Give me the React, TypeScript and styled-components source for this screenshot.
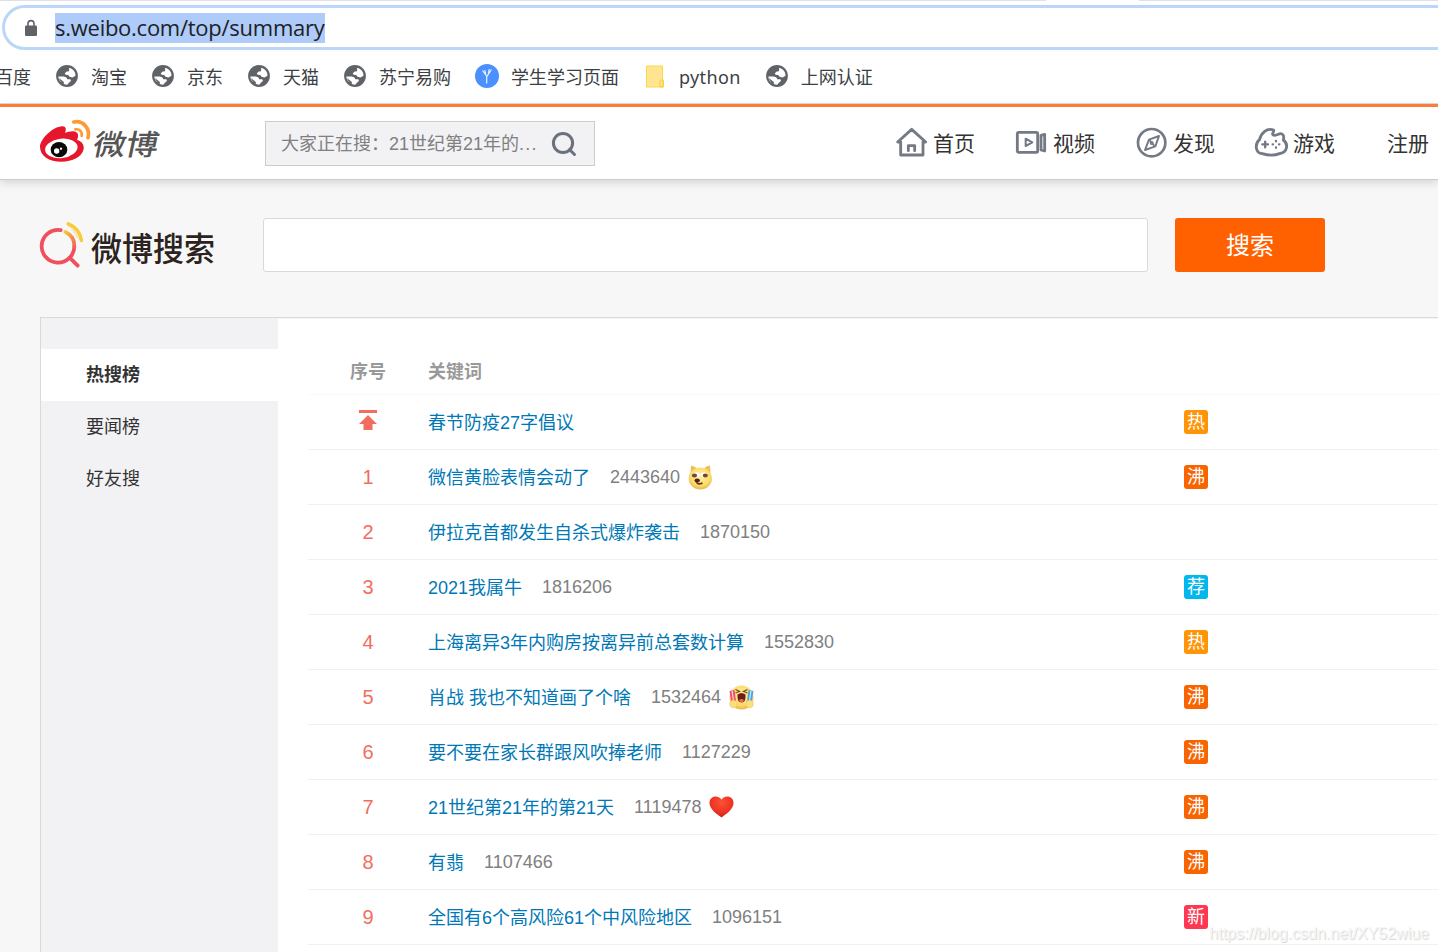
import React from "react";
import styled, { createGlobalStyle } from "styled-components";

const GlobalStyle = createGlobalStyle`
  * { box-sizing: border-box; }
  html, body { margin: 0; padding: 0; overflow: hidden; background: #f7f7f7; }
  body { font-family: "Liberation Sans", "Noto Sans CJK SC", sans-serif; font-size: 18px; color: #333; }
  svg { display: block; flex: none; overflow: visible; }
`;

const Page = styled.div`
  width: 1438px;
  height: 952px;
  display: flex;
  flex-direction: column;
  overflow: hidden;
  position: relative;
`;

const TabEdge = styled.div`
  display: flex;
  justify-content: space-between;
  flex: none;
  height: 5px;
  background: #fff;
`;
const TabEdgeLine = styled.div<{ $w: number }>`
  width: ${(p) => p.$w}px;
  height: 1px;
  background: #dee1e6;
`;

const AddressRow = styled.div`
  flex: none;
  height: 45px;
  padding-left: 2px;
  background: #fff;
`;
const AddressBar = styled.div`
  width: 1470px;
  height: 45px;
  border: 3px solid #bad6f8;
  border-radius: 23px;
  display: flex;
  align-items: center;
  padding-left: 20px;
`;
const Url = styled.span`
  margin-left: 18px;
  height: 30px;
  line-height: 28px;
  width: 270px;
  white-space: nowrap;
  background: #aecbfa;
  color: #202124;
  font-family: "Open Sans", "Noto Sans", sans-serif;
  font-size: 22px;
  letter-spacing: -0.26px;
`;

const Bookmarks = styled.div`
  flex: none;
  height: 54px;
  display: flex;
  align-items: center;
  gap: 24px;
  background: #fff;
  border-bottom: 1px solid #dadce0;
  margin-left: -5px;
  color: #3c4043;
  font-family: "Noto Sans", "Noto Sans CJK SC", sans-serif;
`;
const Bookmark = styled.div`
  display: flex;
  align-items: center;
  gap: 12px;
  white-space: nowrap;
  line-height: 26px;
`;
const Latin = styled.span`
  letter-spacing: 0.35px;
`;

const Header = styled.header`
  flex: none;
  height: 76px;
  border-top: 3px solid #fa7d3c;
  border-bottom: 1px solid #ccc;
  background: #fff;
  box-shadow: 0 3px 9px rgba(0, 0, 0, 0.14);
  display: flex;
  align-items: center;
  padding-left: 40px;
  position: relative;
`;
const WeiboLogo = styled.div`
  width: 225px;
  display: flex;
  align-items: center;
  margin-top: -5px;
`;
const WeiboName = styled.span`
  margin: 4px 0 0 3px;
  font-family: "Noto Sans CJK SC", sans-serif;
  font-size: 32.5px;
  line-height: 36px;
  font-weight: 500;
  color: #555;
  transform: skewX(-12deg) scaleY(0.88);
`;
const TopSearch = styled.div`
  width: 330px;
  height: 45px;
  border: 1px solid #ccc;
  background: #f2f2f5;
  display: flex;
  align-items: center;
  padding: 0 17px 0 15px;
  justify-content: space-between;
  color: #808080;
  white-space: nowrap;
`;
const Hint = styled.span`
  padding-bottom: 3px;
`;
const Dots = styled.span`
  letter-spacing: 1.2px;
`;
const Nav = styled.nav`
  display: flex;
  align-items: center;
  gap: 40px;
  margin-left: 301px;
`;
const NavItem = styled.div<{ $last?: boolean }>`
  display: flex;
  align-items: center;
  gap: 7px;
  width: ${(p) => (p.$last ? "auto" : "80px")};
  font-size: 21px;
  line-height: 30px;
  white-space: nowrap;
  color: #333;
  margin-left: ${(p) => (p.$last ? 11 : 0)}px;
`;
const NavLabel = styled.span`
  padding-top: 2px;
`;

const SearchBand = styled.section`
  flex: none;
  height: 137px;
  padding: 38px 0 0 40px;
  display: flex;
`;
const SearchLogo = styled.div`
  width: 223px;
  height: 54px;
  display: flex;
  align-items: center;
`;
const SearchName = styled.span`
  margin: 4px 0 0 7px;
  font-family: "Noto Sans CJK SC", sans-serif;
  font-size: 31px;
  line-height: 40px;
  font-weight: 500;
  color: #2c2320;
  transform: scaleY(1.08);
`;
const SearchInput = styled.div`
  width: 885px;
  height: 54px;
  background: #fff;
  border: 1px solid #d9d9d9;
  border-radius: 3px;
`;
const SearchButton = styled.button`
  width: 150px;
  height: 54px;
  margin-left: 27px;
  border: 0;
  padding: 0 0 4px;
  border-radius: 3px;
  background: #ff6000;
  color: #fff;
  font-family: inherit;
  font-size: 24px;
`;

const Panel = styled.main`
  flex: 1;
  min-height: 0;
  margin-left: 40px;
  border-top: 1px solid #d9d9d9;
  border-left: 1px solid #d9d9d9;
  background: #fff;
  display: flex;
`;
const Sidebar = styled.aside`
  width: 237px;
  flex: none;
  background: #f2f2f5;
  padding-top: 31px;
`;
const SideItem = styled.div<{ $active?: boolean }>`
  height: 52px;
  line-height: 53px;
  padding-left: 45px;
  background: ${(p) => (p.$active ? "#fff" : "transparent")};
  font-weight: ${(p) => (p.$active ? 700 : 400)};
`;
const Board = styled.div`
  flex: 1;
  padding: 29px 0 0 30px;
  border-top: 1px solid #f5f5f5;
`;
const Row = styled.div<{ $head?: boolean }>`
  display: grid;
  grid-template-columns: 120px 756px 1fr;
  align-items: center;
  height: ${(p) => (p.$head ? 47 : 55)}px;
  padding-bottom: ${(p) => (p.$head ? 2 : 0)}px;
  border-bottom: 1px solid ${(p) => (p.$head ? "#f9f9f9" : "#f0f0f2")};
  color: ${(p) => (p.$head ? "#999" : "inherit")};
  font-weight: ${(p) => (p.$head ? 700 : 400)};
`;
const Rank = styled.div`
  display: flex;
  justify-content: center;
  color: #f26d5f;
  font-size: 20px;
`;
const HeadCell = styled.div<{ $center?: boolean }>`
  text-align: ${(p) => (p.$center ? "center" : "left")};
`;
const Topic = styled.div`
  display: flex;
  align-items: center;
  white-space: nowrap;
`;
const Keyword = styled.a`
  color: #0078b6;
  padding-bottom: 3px;
`;
const Count = styled.span`
  margin: 0 8px 0 20px;
  color: #808080;
`;
const Badge = styled.span<{ $c: string }>`
  width: 24px;
  height: 24px;
  border-radius: 3px;
  background: ${(p) => p.$c};
  color: #fff;
  line-height: 25px;
  text-align: center;
`;
const Watermark = styled.div`
  position: absolute;
  right: 9px;
  bottom: 8px;
  font-size: 16px;
  line-height: 20px;
  color: #f6f6f6;
  text-shadow: 1px 1px 1px rgba(0, 0, 0, 0.17);
`;

const Lock = () => (
  <svg width="12" height="16" viewBox="0 0 12 16">
    <rect x="0" y="5.5" width="12" height="10.5" rx="1.3" fill="#5f6368" />
    <path d="M3 6V3.6a3 3 0 0 1 6 0V6" fill="none" stroke="#5f6368" strokeWidth="1.6" />
  </svg>
);

const Globe = () => (
  <svg width="24" height="24" viewBox="0 0 24 24">
    <circle cx="12" cy="11" r="10.9" fill="#5f6368" />
    <path
      d="M14.200 2.800C18.200 4 20.600 7 20.500 10.800L17.500 12.500 14.600 11.800 13.200 10 10.600 9.800 9.800 8.200 11.800 6.600 14 6.200z"
      fill="#fff"
    />
    <path d="M3.300 11.500H8c2.400 0 4 .8 4.200 2.700h2.600c1.200.2 1.500 1.200.8 2.100l-1.700 1.500-1.600 1.900c-5-.2-8.600-3.200-9-8.200z" fill="#fff" />
    <path d="M3.600 12.800l5.200 4.100v2.600l-2.400-1.300z" fill="#5f6368" />
  </svg>
);
const YIcon = () => (
  <svg width="24" height="24" viewBox="0 0 24 24">
    <circle cx="12" cy="11" r="12" fill="#4a90ff" />
    <path d="M7.500 5.500l4.200 5.700v7.300M16.500 4.500l-4.400 6.700M9.600 5l1.200 4.200M14.300 4l-.9 4.700" fill="none" stroke="#e8f1ff" strokeWidth="1.200" />
  </svg>
);
const Folder = () => (
  <svg width="24" height="24" viewBox="0 0 24 24">
    <path d="M3.500 1h16v14h1v7h-17z" fill="#ffe591" stroke="#fbd84b" />
    <path d="M17 22v-5.500q0-1.500 1.500-1.500t1.500 1.500V22z" fill="#ffe591" stroke="#f3cd43" />
  </svg>
);

const WeiboMark = () => (
  <svg width="51" height="42" viewBox="120 58 153 126">
    <path d="M120 138c1-23 38-60 67-61 12 0 12 10 8 20 12-5 27-8 36-1 6 6 3 15 0 22 14 4 22 14 20 27-4 24-34 38-67 38-37 0-64-17-64-45z" fill="#e6162d" />
    <ellipse cx="184" cy="143" rx="49" ry="29" transform="rotate(-7 184 143)" fill="#fff" />
    <ellipse cx="177" cy="147" rx="25" ry="23" fill="#0a0a0a" />
    <circle cx="170" cy="151" r="8" fill="#fff" />
    <circle cx="183" cy="144" r="3.500" fill="#fff" />
    <path d="M226 86c14-2 21 8 19 20" fill="none" stroke="#ff9933" strokeWidth="8" strokeLinecap="round" />
    <path d="M221 64c29-6 50 20 43 47" fill="none" stroke="#ff9933" strokeWidth="11" strokeLinecap="round" />
  </svg>
);
const SearchMark = () => (
  <svg width="44" height="46" viewBox="120 368 132 138">
    <defs>
      <linearGradient id="arc" x1="0" y1="0" x2="1" y2="1">
        <stop offset="0" stopColor="#f7c63c" />
        <stop offset="1" stopColor="#f2655b" />
      </linearGradient>
    </defs>
    <path d="M182 392.500A49 49 0 1 0 223 441" fill="none" stroke="#f04f5e" strokeWidth="11.500" strokeLinecap="round" />
    <path d="M196 398C213 406 224 422 223 442" fill="none" stroke="url(#arc)" strokeWidth="11" strokeLinecap="round" />
    <path d="M209 475l24 24" stroke="#f04f5e" strokeWidth="11.500" strokeLinecap="round" />
    <path d="M205 374q34 14 39 49" fill="none" stroke="#f8cb38" strokeWidth="11" strokeLinecap="round" />
    <path d="M214 388q14 11 19 28" fill="none" stroke="#fbe3c2" strokeWidth="7" />
  </svg>
);
const Magnifier = () => (
  <svg width="26" height="26" viewBox="0 0 26 26">
    <circle cx="12" cy="13" r="9.600" fill="none" stroke="#6a707c" strokeWidth="3" />
    <path d="M18.500 19.500l5 5" stroke="#6a707c" strokeWidth="3" strokeLinecap="round" />
  </svg>
);

const navStroke = { fill: "none", stroke: "#737985", strokeWidth: 8.5, strokeLinejoin: "round", strokeLinecap: "round" } as const;
const Home = () => (
  <svg width="30" height="30" viewBox="48 55 90 90" {...navStroke}>
    <path d="M53 97l42-38 42 38h-8v39H62V97zM85 123v-15h19v15" />
  </svg>
);
const Video = () => (
  <svg width="30" height="30" viewBox="408 55 90 90" {...navStroke}>
    <rect x="412" y="68" width="61" height="60" rx="4" />
    <path d="M483 77l11-3v50l-11-3z" />
    <path d="M437 87l20 11-20 11z" strokeWidth="6" />
  </svg>
);
const Compass = () => (
  <svg width="30" height="30" viewBox="48 55 90 90" {...navStroke}>
    <circle cx="95" cy="99" r="41" strokeWidth="8" />
    <path d="M117 79l-11 31-31 11 12-31z" strokeWidth="6" />
    <path d="M89 92l13 15" strokeWidth="5" />
    <circle cx="95" cy="100" r="4" strokeWidth="4" />
  </svg>
);
const Game = () => (
  <svg width="30" height="30" viewBox="408 55 90 90" {...navStroke}>
    <path d="M461 61c-22-7-38 10-42 28-16 14-13 42 8 43 18 6 37 6 54-1 21-4 25-28 9-40 4-14-3-23-15-17-8 4-16 4-17 0-2-4 4-6 3-13z" />
    <path d="M427 104h17M435.500 96v17" strokeWidth="7" />
    <path d="M468 94v1M468 113v1M458 104h1M477 104h1" strokeWidth="7" />
  </svg>
);

const ArrowSlot = styled.span`
  padding-bottom: 5px;
`;
const TopArrow = () => (
  <ArrowSlot>
    <svg width="20" height="20" viewBox="0 0 20 20" fill="#f26d5f">
      <path d="M1 0h18v3H1zM10 5l9 9h-4.500v6h-9v-6H1z" />
    </svg>
  </ArrowSlot>
);

const Doge = () => (
  <svg width="25" height="25" viewBox="0 0 25 25">
    <defs>
      <radialGradient id="face" cx=".5" cy=".4" r=".6">
        <stop offset="0" stopColor="#fff0a0" />
        <stop offset=".7" stopColor="#fbdc6c" />
        <stop offset="1" stopColor="#e9b54a" />
      </radialGradient>
    </defs>
    <path d="M2.500 9L3 .5q4 1 6 3h7q3-3 6-3l.5 8z" fill="#efbd50" />
    <ellipse cx="12.300" cy="13.500" rx="11.600" ry="11" fill="url(#face)" />
    <ellipse cx="8.500" cy="9.800" rx="3.400" ry="2.600" fill="#fff" />
    <ellipse cx="16" cy="9.800" rx="3.200" ry="2.600" fill="#fff" />
    <ellipse cx="6.500" cy="10.500" rx="2.600" ry="2" fill="#7a4527" />
    <ellipse cx="17.300" cy="10.500" rx="2.500" ry="2" fill="#7a4527" />
    <ellipse cx="9.200" cy="15.500" rx="2.700" ry="1.900" fill="#4f241b" />
    <path d="M8.500 17q1 3 6 1.200" fill="none" stroke="#6b3522" strokeWidth="1.800" />
  </svg>
);
const Cheer = () => (
  <svg width="25" height="25" viewBox="0 0 25 25">
    <circle cx="12.500" cy="12.500" r="12" fill="url(#face)" />
    <path d="M6.500 4.500l4 2-4 1.500M18.500 4.500l-4 2 4 1.500" fill="none" stroke="#7c4a20" strokeWidth="1.300" />
    <path d="M8.500 9.500q4-3 8 0 .5 8-4 8t-4-8z" fill="#6b2017" />
    <path d="M10 15q2.500-2 5 0-1 2.500-2.500 2.500T10 15z" fill="#ef6a55" />
    <path d="M.5 6l5-1 1.500 11-4.500 2z" fill="#f04e6d" />
    <path d="M2.500 6l1.200-.3L5.200 17l-1 .4z" fill="#ffd3dc" />
    <path d="M24.500 6l-5-1L18 16l4.500 2z" fill="#4aa5e5" />
    <path d="M22.500 6l-1.200-.3L19.800 17l1 .4z" fill="#cceaff" />
    <circle cx="4.500" cy="19" r="3.800" fill="#fbdf7c" stroke="#edbd4c" strokeWidth=".5" />
    <circle cx="20.500" cy="19" r="3.800" fill="#fbdf7c" stroke="#edbd4c" strokeWidth=".5" />
  </svg>
);
const Heart = () => (
  <svg width="25" height="22" viewBox="0 0 25 22">
    <defs>
      <radialGradient id="heart" cx=".5" cy=".3" r=".7">
        <stop offset="0" stopColor="#fb5335" />
        <stop offset=".7" stopColor="#ec3022" />
        <stop offset="1" stopColor="#c9201b" />
      </radialGradient>
    </defs>
    <path d="M12.500 3.500C16-1.500 24.500-.5 24.500 7c0 6-7 11-12 14.500C7.500 18 .5 13 .5 7 .5-.5 9-1.500 12.500 3.500z" fill="url(#heart)" />
  </svg>
);

const HOT = "#ff9406";
const BOIL = "#f86400";

type Item = { rank?: number; word: string; count?: string; emoji?: React.ReactNode; tag?: string; color?: string };
const items: Item[] = [
  { word: "春节防疫27字倡议", tag: "热", color: HOT },
  { rank: 1, word: "微信黄脸表情会动了", count: "2443640", emoji: <Doge />, tag: "沸", color: BOIL },
  { rank: 2, word: "伊拉克首都发生自杀式爆炸袭击", count: "1870150" },
  { rank: 3, word: "2021我属牛", count: "1816206", tag: "荐", color: "#00b7ee" },
  { rank: 4, word: "上海离异3年内购房按离异前总套数计算", count: "1552830", tag: "热", color: HOT },
  { rank: 5, word: "肖战 我也不知道画了个啥", count: "1532464", emoji: <Cheer />, tag: "沸", color: BOIL },
  { rank: 6, word: "要不要在家长群跟风吹捧老师", count: "1127229", tag: "沸", color: BOIL },
  { rank: 7, word: "21世纪第21年的第21天", count: "1119478", emoji: <Heart />, tag: "沸", color: BOIL },
  { rank: 8, word: "有翡", count: "1107466", tag: "沸", color: BOIL },
  { rank: 9, word: "全国有6个高风险61个中风险地区", count: "1096151", tag: "新", color: "#ff3852" },
];

const bookmarks: { icon?: React.ReactNode; label: string; latin?: boolean }[] = [
  { label: "百度" },
  { icon: <Globe />, label: "淘宝" },
  { icon: <Globe />, label: "京东" },
  { icon: <Globe />, label: "天猫" },
  { icon: <Globe />, label: "苏宁易购" },
  { icon: <YIcon />, label: "学生学习页面" },
  { icon: <Folder />, label: "python", latin: true },
  { icon: <Globe />, label: "上网认证" },
];

export default function App() {
  return (
    <Page>
      <GlobalStyle />
      <TabEdge>
        <TabEdgeLine $w={1046} />
        <TabEdgeLine $w={299} />
      </TabEdge>
      <AddressRow>
        <AddressBar>
          <Lock />
          <Url>s.weibo.com/top/summary</Url>
        </AddressBar>
      </AddressRow>
      <Bookmarks>
        {bookmarks.map((b) => (
          <Bookmark key={b.label}>
            {b.icon}
            {b.latin ? <Latin>{b.label}</Latin> : b.label}
          </Bookmark>
        ))}
      </Bookmarks>
      <Header>
        <WeiboLogo>
          <WeiboMark />
          <WeiboName>微博</WeiboName>
        </WeiboLogo>
        <TopSearch>
          <Hint>大家正在搜：21世纪第21年的<Dots>...</Dots></Hint>
          <Magnifier />
        </TopSearch>
        <Nav>
          <NavItem><Home /><NavLabel>首页</NavLabel></NavItem>
          <NavItem><Video /><NavLabel>视频</NavLabel></NavItem>
          <NavItem><Compass /><NavLabel>发现</NavLabel></NavItem>
          <NavItem><Game /><NavLabel>游戏</NavLabel></NavItem>
          <NavItem $last><NavLabel>注册</NavLabel></NavItem>
        </Nav>
      </Header>
      <SearchBand>
        <SearchLogo>
          <SearchMark />
          <SearchName>微博搜索</SearchName>
        </SearchLogo>
        <SearchInput />
        <SearchButton>搜索</SearchButton>
      </SearchBand>
      <Panel>
        <Sidebar>
          <SideItem $active>热搜榜</SideItem>
          <SideItem>要闻榜</SideItem>
          <SideItem>好友搜</SideItem>
        </Sidebar>
        <Board>
          <Row $head>
            <HeadCell $center>序号</HeadCell>
            <HeadCell>关键词</HeadCell>
          </Row>
          {items.map((it) => (
            <Row key={it.word}>
              <Rank>{it.rank ?? <TopArrow />}</Rank>
              <Topic>
                <Keyword>{it.word}</Keyword>
                {it.count && <Count>{it.count}</Count>}
                {it.emoji}
              </Topic>
              {it.tag && <Badge $c={it.color!}>{it.tag}</Badge>}
            </Row>
          ))}
        </Board>
      </Panel>
      <Watermark>https://blog.csdn.net/XY52wiue</Watermark>
    </Page>
  );
}
